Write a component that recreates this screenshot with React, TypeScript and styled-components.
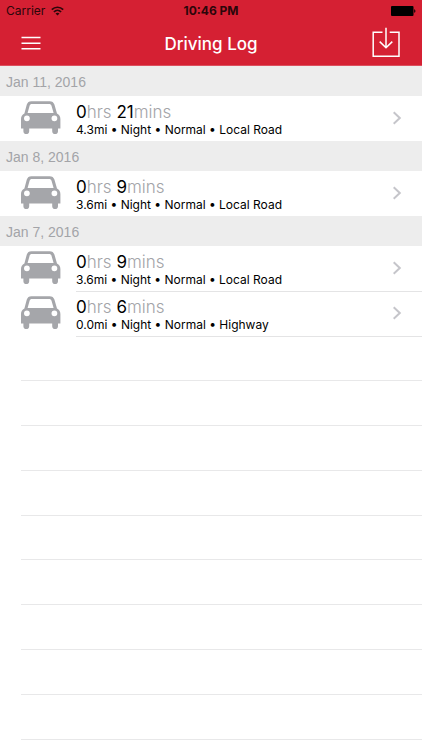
import React from 'react';
import styled, { createGlobalStyle } from 'styled-components';

const GlobalStyle = createGlobalStyle`
  *, *::before, *::after { box-sizing: border-box; }
  body {
    margin: 0;
    background: #fff;
    color: #000;
    font-family: Inter, "Liberation Sans", sans-serif;
  }
  button { font: inherit; color: inherit; background: none; border: 0; padding: 0; cursor: pointer; }
  svg { display: block; }
`;

const Screen = styled.div`
  min-height: 100vh;
  display: flex;
  flex-direction: column;
`;

const Header = styled.header`
  background: #d52033;
  border-bottom: 1px solid #dc4f5e;
`;

const StatusBar = styled.div`
  display: grid;
  grid-template-columns: 1fr auto 1fr;
  align-items: center;
  height: 22px;
  padding: 0 6px;
  font-size: 12px;
  line-height: 22px;
  color: #2b060a;
`;

const Carrier = styled.span`
  display: flex;
  align-items: center;
  gap: 6px;
`;

const Clock = styled.time`
  font-weight: 700;
`;

const BatterySlot = styled.span`
  justify-self: end;
`;

const NavBar = styled.div`
  display: grid;
  grid-template-columns: 1fr auto 1fr;
  align-items: center;
  height: 43px;
  padding: 0 20px;
  color: #fff;
`;

const Title = styled.h1`
  margin: 0;
  font-size: 17px;
  line-height: 22px;
  font-weight: 500;
`;

const IconButton = styled.button<{ $end?: boolean }>`
  justify-self: ${(p) => (p.$end ? 'end' : 'start')};
  padding-bottom: 2px;
`;

const SectionHeading = styled.h2`
  margin: 0;
  height: 30px;
  padding: 1px 6px 0;
  background: #ededed;
  color: #a3a4a8;
  font-family: "Liberation Sans", Arial, sans-serif;
  font-size: 14px;
  line-height: 30px;
  font-weight: 400;
`;

const Trips = styled.ul`
  list-style: none;
  margin: 0;
  padding: 0;
`;

const TripButton = styled.button`
  display: flex;
  width: 100%;
  height: 45px;
  padding-left: 20px;
  gap: 15px;
  align-items: stretch;
  text-align: left;
`;

const CarSlot = styled.span`
  padding-top: 4px;
`;

const TripBody = styled.span<{ $line: boolean }>`
  flex: 1;
  display: flex;
  align-items: center;
  justify-content: space-between;
  padding: 0 20px 1px 0;
  box-shadow: 0 1px 0 ${(p) => (p.$line ? '#e4e4e5' : 'transparent')};
`;

const TripText = styled.span`
  display: flex;
  flex-direction: column;
  padding-top: 4px;
`;

const Duration = styled.span`
  font-size: 17px;
  line-height: 19px;
`;

const Unit = styled.span`
  color: #a3a4a8;
  font-weight: 300;
`;

const Details = styled.span`
  font-size: 12px;
  line-height: 15px;
`;

const EmptyRows = styled.div`
  flex: 1;
  display: flex;
  flex-direction: column;
  padding: 0 0 10px 21px;
`;

const EmptyRow = styled.div`
  flex: 1;
  min-height: 30px;
  border-bottom: 1px solid #e8e8e9;
`;

const WifiIcon = () => (
  <svg width="13" height="10" viewBox="0 0 13 10" fill="none" stroke="#2b060a" strokeWidth="1.7" aria-hidden="true">
    <path d="M0.8 3.7C4 0.4 9 0.4 12.2 3.7" />
    <path d="M2.9 6C5 3.9 8 3.9 10.1 6" />
    <path d="M6.5 9.6L4.5 7.6C5.6 6.6 7.4 6.6 8.5 7.6Z" fill="#2b060a" stroke="none" />
  </svg>
);

const BatteryIcon = () => (
  <svg width="25" height="10" viewBox="0 0 25 10" aria-hidden="true">
    <rect x="0" y="0" width="22.5" height="10" rx="1" fill="#000" />
    <path d="M23.2 3.2C24.8 3.5 24.8 6.5 23.2 6.8Z" fill="#000" />
  </svg>
);

const MenuIcon = () => (
  <svg width="22" height="16" viewBox="0 0 22 16" stroke="#fff" strokeWidth="1.5" aria-hidden="true">
    <path d="M1.5 2.5H20.5M1.5 8.2H20.5M1.5 13.8H20.5" />
  </svg>
);

const DownloadIcon = () => (
  <svg width="32" height="32" viewBox="0 0 32 32" fill="none" stroke="#fff" strokeWidth="1.5" aria-hidden="true">
    <path d="M12.5 5.2H3.2V29.3H29V5.2H19.7" />
    <path d="M16 0.8V20.6M9.7 14.6L16 20.8L22.3 14.6" />
  </svg>
);

const CarIcon = () => (
  <svg width="41" height="35" viewBox="0 0 41 35" aria-hidden="true">
    <path
      fill="#a5a6aa"
      fillRule="evenodd"
      d="M11.4 1.2H29.6C32.2 1.2 33.6 2.3 34.4 4.6L37 13.6C39.2 14.6 40.4 16.6 40.4 19V28.6H38V31.2C38 35 32.2 35 32.2 31.2V28.6H9.2V31.2C9.2 35 3.4 35 3.4 31.2V28.6H1V19C1 16.6 2.2 14.6 4.4 13.6L6.8 4.6C7.6 2.3 8.9 1.2 11.4 1.2ZM12 3.9C10.6 3.9 10 4.3 9.6 5.8L7.6 12.9H33.6L31.5 5.8C31.1 4.3 30.4 3.9 29 3.9ZM6.9 15.4A2.9 2.9 0 1 0 6.9 21.2A2.9 2.9 0 1 0 6.9 15.4ZM34.4 15.4A2.9 2.9 0 1 0 34.4 21.2A2.9 2.9 0 1 0 34.4 15.4Z"
    />
  </svg>
);

const Chevron = () => (
  <svg width="10" height="14" viewBox="0 0 10 14" fill="none" stroke="#c5c5ca" strokeWidth="2" aria-hidden="true">
    <path d="M1.7 1.2L7.8 7L1.7 12.8" />
  </svg>
);

interface Trip {
  hours: number;
  minutes: number;
  details: string[];
}

const days: { date: string; trips: Trip[] }[] = [
  { date: 'Jan 11, 2016', trips: [{ hours: 0, minutes: 21, details: ['4.3mi', 'Night', 'Normal', 'Local Road'] }] },
  { date: 'Jan 8, 2016', trips: [{ hours: 0, minutes: 9, details: ['3.6mi', 'Night', 'Normal', 'Local Road'] }] },
  {
    date: 'Jan 7, 2016',
    trips: [
      { hours: 0, minutes: 9, details: ['3.6mi', 'Night', 'Normal', 'Local Road'] },
      { hours: 0, minutes: 6, details: ['0.0mi', 'Night', 'Normal', 'Highway'] },
    ],
  },
];

const emptyRows = Array.from({ length: 9 }, (_, i) => i);

export default function App() {
  return (
    <>
      <GlobalStyle />
      <Screen>
        <Header>
          <StatusBar>
            <Carrier>
              Carrier
              <WifiIcon />
            </Carrier>
            <Clock>10:46 PM</Clock>
            <BatterySlot>
              <BatteryIcon />
            </BatterySlot>
          </StatusBar>
          <NavBar>
            <IconButton aria-label="Menu">
              <MenuIcon />
            </IconButton>
            <Title>Driving Log</Title>
            <IconButton $end aria-label="Export log">
              <DownloadIcon />
            </IconButton>
          </NavBar>
        </Header>
        <main>
          {days.map((day, d) => (
            <section key={day.date}>
              <SectionHeading>{day.date}</SectionHeading>
              <Trips>
                {day.trips.map((trip, t) => (
                  <li key={t}>
                    <TripButton>
                      <CarSlot>
                        <CarIcon />
                      </CarSlot>
                      <TripBody $line={d === days.length - 1}>
                        <TripText>
                          <Duration>
                            {trip.hours}
                            <Unit>hrs</Unit> {trip.minutes}
                            <Unit>mins</Unit>
                          </Duration>
                          <Details>{trip.details.join(' • ')}</Details>
                        </TripText>
                        <Chevron />
                      </TripBody>
                    </TripButton>
                  </li>
                ))}
              </Trips>
            </section>
          ))}
        </main>
        <EmptyRows aria-hidden="true">
          {emptyRows.map((i) => (
            <EmptyRow key={i} />
          ))}
        </EmptyRows>
      </Screen>
    </>
  );
}
